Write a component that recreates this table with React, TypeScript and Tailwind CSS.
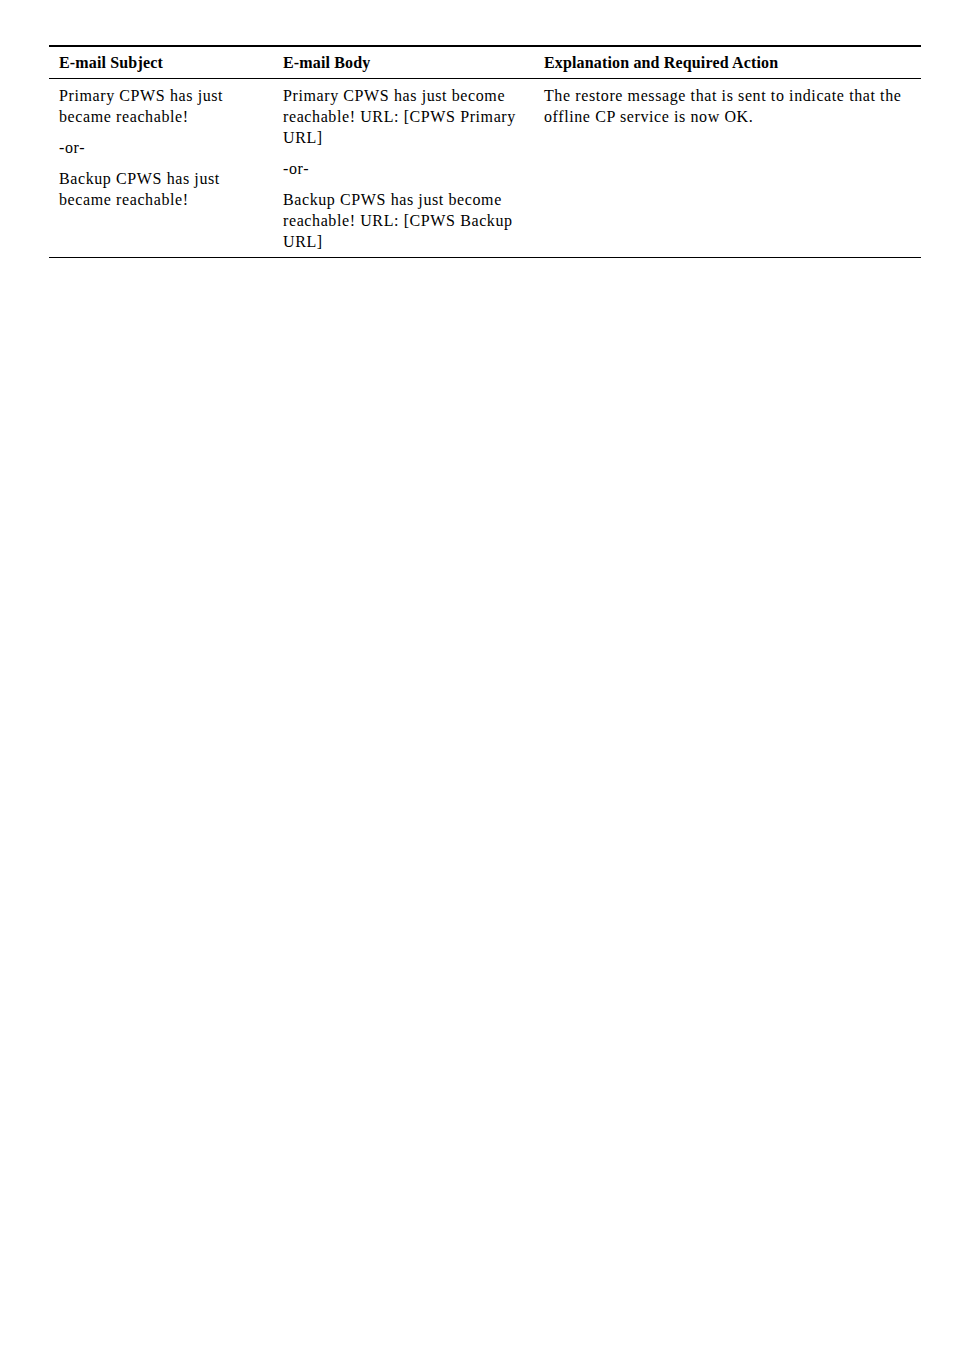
export default function App() {
  const cell = "pl-[10px] pr-2 whitespace-nowrap"
  return (
    <div className="min-h-[1350px] w-[954px] bg-white pt-[45px] pl-[49px] text-black" style={{ fontFamily: '"Liberation Serif", serif' }}>
      <div className="w-[872px] border-t-2 border-b border-black text-[16px] leading-[21px]">
        <div className="grid grid-cols-[224px_261px_387px] border-b border-black pt-[5px] pb-[5px] font-bold tracking-[0.15px]">
          <div className={cell}>E-mail Subject</div>
          <div className={cell}>E-mail Body</div>
          <div className={cell}>Explanation and Required Action</div>
        </div>
        <div className="grid grid-cols-[224px_261px_387px] pt-[6px] pb-[5px] tracking-[0.6px]">
          <div className={`${cell} flex flex-col gap-[10px]`}>
            <p>Primary CPWS has just<br />became reachable!</p>
            <p>-or-</p>
            <p>Backup CPWS has just<br />became reachable!</p>
          </div>
          <div className={`${cell} flex flex-col gap-[10px]`}>
            <p>Primary CPWS has just become<br />reachable! URL: [CPWS Primary<br />URL]</p>
            <p>-or-</p>
            <p>Backup CPWS has just become<br />reachable! URL: [CPWS Backup<br />URL]</p>
          </div>
          <div className={cell}>
            <p>The restore message that is sent to indicate that the<br />offline CP service is now OK.</p>
          </div>
        </div>
      </div>
    </div>
  )
}
